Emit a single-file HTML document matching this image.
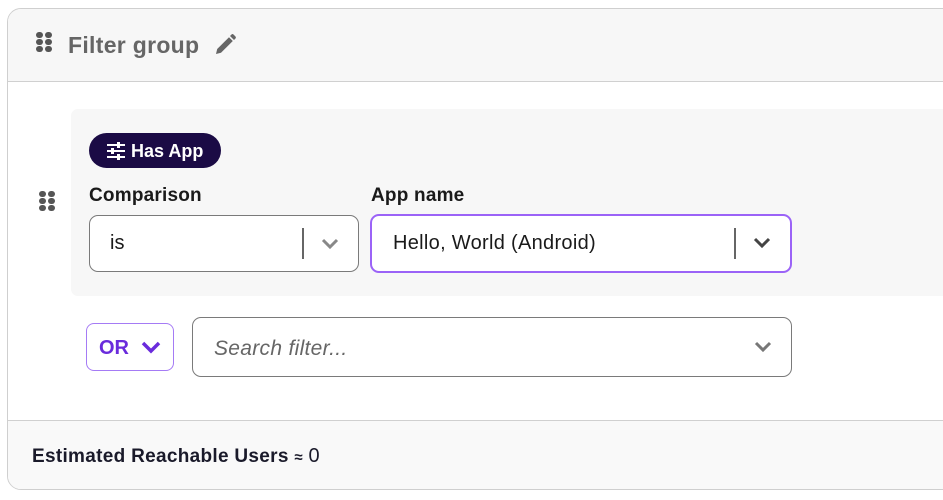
<!DOCTYPE html><html><head><style>
*{box-sizing:border-box;margin:0;padding:0}
body{width:943px;height:500px;background:#fff;font-family:"Liberation Sans",sans-serif;position:relative;overflow:hidden;color:#1a1a1a}
.card{position:absolute;left:7px;top:8px;width:960px;height:482px;border:1px solid #cfcfcf;border-radius:14px;overflow:hidden;background:#fff}
.hdr{position:absolute;left:0;top:0;right:0;height:73px;background:#f7f7f7;border-bottom:1px solid #d0d0d0}
.ftr{position:absolute;left:0;top:411px;right:0;bottom:0;background:#f9f9f9;border-top:1px solid #d0d0d0}
.grip{position:absolute;display:grid;grid-template-columns:7px 7px;gap:1px 2px}
.grip i{width:7px;height:6px;border-radius:3px;background:#555;display:block}
.abs{position:absolute;white-space:nowrap}
.sel{position:absolute;border:1px solid #7a7a7a;border-radius:9px;background:#fff}
.chev{position:absolute}
</style></head><body>
<div class="card">
 <div class="hdr"></div>
 <div class="ftr"></div>
</div>
<div class="grip" style="left:36px;top:32px"><i></i><i></i><i></i><i></i><i></i><i></i></div>
<div class="abs" style="left:68px;top:32px;font-size:23px;font-weight:bold;color:#666;letter-spacing:0.3px">Filter group</div>
<svg class="abs" style="left:213px;top:33px" width="24" height="24" viewBox="0 0 24 24"><path d="M3 21l1.2-5L16 4.2l3.8 3.8L8 19.8z" fill="#666"/><path d="M17 3l1.5-1.5a1.5 1.5 0 012 0l2 2a1.5 1.5 0 010 2L21 7z" fill="#666"/></svg>
<div class="abs" style="left:71px;top:109px;width:900px;height:187px;background:#f7f7f7;border-radius:7px"></div>
<div class="grip" style="left:39px;top:191px"><i></i><i></i><i></i><i></i><i></i><i></i></div>
<div class="abs" style="left:89px;top:133px;width:132px;height:35px;background:#1b0b45;border-radius:18px;color:#fff;font-weight:bold;font-size:18px;line-height:36px;padding-left:42px">Has App</div>
<svg class="abs" style="left:106px;top:142px" width="20" height="18" viewBox="0 0 20 18"><g stroke="#fff" stroke-width="2"><path d="M1 3h18M1 9h18M1 15h18"/></g><g fill="#fff"><rect x="11" y="0" width="3" height="6"/><rect x="5" y="6" width="3" height="6"/><rect x="11" y="12" width="3" height="6"/></g></svg>
<div class="abs" style="left:89px;top:185px;font-size:19px;font-weight:bold;letter-spacing:0.2px">Comparison</div>
<div class="abs" style="left:371px;top:185px;font-size:19px;font-weight:bold;letter-spacing:0.2px">App name</div>
<div class="sel" style="left:89px;top:215px;width:270px;height:57px"></div>
<div class="abs" style="left:110px;top:232px;font-size:20px">is</div>
<div class="abs" style="left:302px;top:228px;width:2px;height:31px;background:#666"></div>
<svg class="chev" style="left:320px;top:238px" width="20" height="12" viewBox="0 0 20 12"><path d="M3 2l7 7 7-7" fill="none" stroke="#888" stroke-width="3"/></svg>
<div class="sel" style="left:370px;top:214px;width:422px;height:59px;border:2.5px solid #9b63f7"></div>
<div class="abs" style="left:393px;top:232px;font-size:20px;letter-spacing:0.3px">Hello, World (Android)</div>
<div class="abs" style="left:734px;top:228px;width:2px;height:31px;background:#666"></div>
<svg class="chev" style="left:752px;top:237px" width="20" height="12" viewBox="0 0 20 12"><path d="M3 2l7 7 7-7" fill="none" stroke="#444" stroke-width="3"/></svg>
<div class="abs" style="left:86px;top:323px;width:88px;height:48px;border:1px solid #a57bf5;border-radius:8px;background:#fff"></div>
<div class="abs" style="left:99px;top:337px;font-size:20px;font-weight:bold;color:#6a2bdc">OR</div>
<svg class="abs" style="left:140px;top:340px" width="22" height="14" viewBox="0 0 22 14"><path d="M3 3l8 8 8-8" fill="none" stroke="#6a2bdc" stroke-width="3.5"/></svg>
<div class="sel" style="left:192px;top:317px;width:600px;height:60px"></div>
<div class="abs" style="left:214px;top:337px;font-size:21px;font-style:italic;color:#666;letter-spacing:0.3px">Search filter...</div>
<svg class="chev" style="left:753px;top:341px" width="20" height="12" viewBox="0 0 20 12"><path d="M3 2l7 7 7-7" fill="none" stroke="#777" stroke-width="3"/></svg>
<div class="abs" style="left:32px;top:445px;font-size:19px;font-weight:bold;color:#1a1a2a;letter-spacing:0.3px">Estimated Reachable Users <span style="font-size:15px">≈</span> <span style="font-weight:normal;font-size:20px">0</span></div>
</body></html>
